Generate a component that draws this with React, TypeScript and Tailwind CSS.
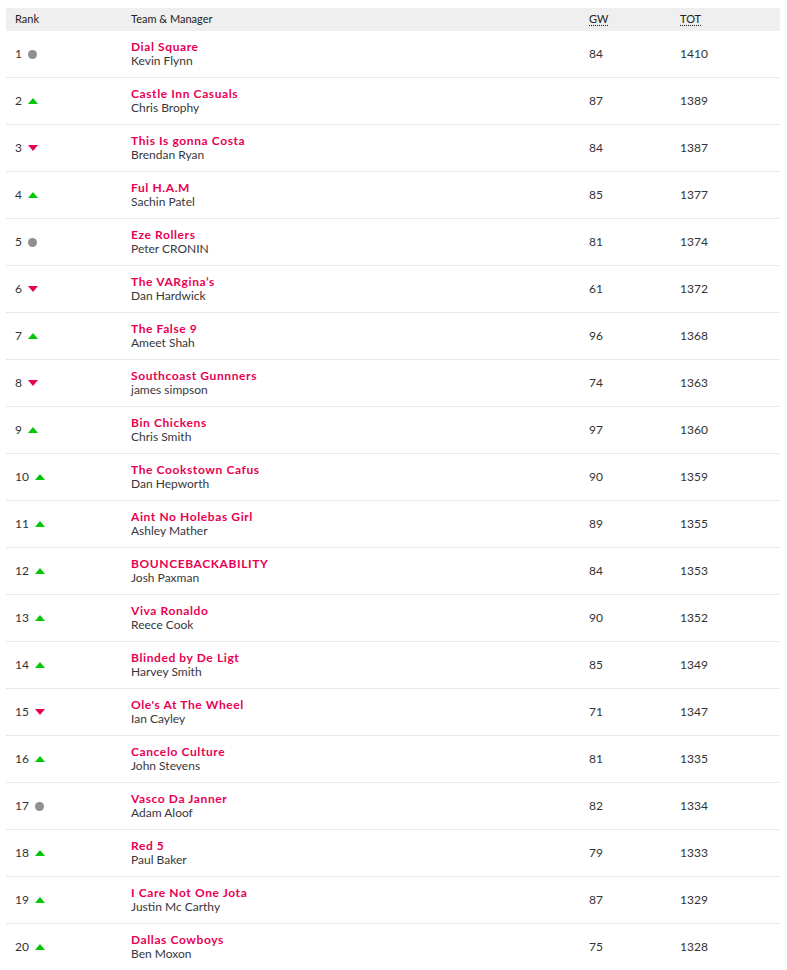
import React from 'react';

type Move = 'up' | 'down' | 'same';

const rows: { rank: number; move: Move; team: string; manager: string; gw: number; tot: number }[] = [
  { rank: 1, move: 'same', team: 'Dial Square', manager: 'Kevin Flynn', gw: 84, tot: 1410 },
  { rank: 2, move: 'up', team: 'Castle Inn Casuals', manager: 'Chris Brophy', gw: 87, tot: 1389 },
  { rank: 3, move: 'down', team: 'This Is gonna Costa', manager: 'Brendan Ryan', gw: 84, tot: 1387 },
  { rank: 4, move: 'up', team: 'Ful H.A.M', manager: 'Sachin Patel', gw: 85, tot: 1377 },
  { rank: 5, move: 'same', team: 'Eze Rollers', manager: 'Peter CRONIN', gw: 81, tot: 1374 },
  { rank: 6, move: 'down', team: 'The VARgina’s', manager: 'Dan Hardwick', gw: 61, tot: 1372 },
  { rank: 7, move: 'up', team: 'The False 9', manager: 'Ameet Shah', gw: 96, tot: 1368 },
  { rank: 8, move: 'down', team: 'Southcoast Gunnners', manager: 'james simpson', gw: 74, tot: 1363 },
  { rank: 9, move: 'up', team: 'Bin Chickens', manager: 'Chris Smith', gw: 97, tot: 1360 },
  { rank: 10, move: 'up', team: 'The Cookstown Cafus', manager: 'Dan Hepworth', gw: 90, tot: 1359 },
  { rank: 11, move: 'up', team: 'Aint No Holebas Girl', manager: 'Ashley Mather', gw: 89, tot: 1355 },
  { rank: 12, move: 'up', team: 'BOUNCEBACKABILITY', manager: 'Josh Paxman', gw: 84, tot: 1353 },
  { rank: 13, move: 'up', team: 'Viva Ronaldo', manager: 'Reece Cook', gw: 90, tot: 1352 },
  { rank: 14, move: 'up', team: 'Blinded by De Ligt', manager: 'Harvey Smith', gw: 85, tot: 1349 },
  { rank: 15, move: 'down', team: "Ole's At The Wheel", manager: 'Ian Cayley', gw: 71, tot: 1347 },
  { rank: 16, move: 'up', team: 'Cancelo Culture', manager: 'John Stevens', gw: 81, tot: 1335 },
  { rank: 17, move: 'same', team: 'Vasco Da Janner', manager: 'Adam Aloof', gw: 82, tot: 1334 },
  { rank: 18, move: 'up', team: 'Red 5', manager: 'Paul Baker', gw: 79, tot: 1333 },
  { rank: 19, move: 'up', team: 'I Care Not One Jota', manager: 'Justin Mc Carthy', gw: 87, tot: 1329 },
  { rank: 20, move: 'up', team: 'Dallas Cowboys', manager: 'Ben Moxon', gw: 75, tot: 1328 },
];

function MoveIcon({ move }: { move: Move }) {
  if (move === 'same') {
    return <span className="inline-block w-[9px] h-[9px] rounded-full bg-[#909090]" />;
  }
  if (move === 'up') {
    return (
      <svg width="10" height="6" viewBox="0 0 10 6" className="block">
        <polygon points="5,0 10,6 0,6" fill="#05c605" />
      </svg>
    );
  }
  return (
    <svg width="10" height="6" viewBox="0 0 10 6" className="block">
      <polygon points="0,0 10,0 5,6" fill="#e90052" />
    </svg>
  );
}

export default function App() {
  return (
    <div className="min-h-screen bg-white pt-2 px-[6px] font-['Lato',sans-serif] text-[#333]">
      <div className="w-[774px]">
        {/* header */}
        <div className="grid grid-cols-[125px_458px_91px_100px] h-[23px] items-center bg-[#efefef] text-[11px] text-[#222]">
          <div className="pl-[9px]">Rank</div>
          <div>Team &amp; Manager</div>
          <div>
            <abbr title="Gameweek" className="underline decoration-dotted underline-offset-2">GW</abbr>
          </div>
          <div>
            <abbr title="Total" className="underline decoration-dotted underline-offset-2">TOT</abbr>
          </div>
        </div>

        {rows.map((r) => (
          <div
            key={r.rank}
            className="grid grid-cols-[125px_458px_91px_100px] h-[47px] items-center border-b border-[#e8e8e8] text-[12px]"
          >
            <div className="pl-[9px] flex items-center gap-[6px] text-[#333]">
              <span>{r.rank}</span>
              <MoveIcon move={r.move} />
            </div>
            <div className="flex flex-col leading-[14px]">
              <span className="font-bold tracking-[0.6px] text-[#e90052]">{r.team}</span>
              <span className="text-[#37373d]">{r.manager}</span>
            </div>
            <div className="text-[#333]">{r.gw}</div>
            <div className="text-[#333]">{r.tot}</div>
          </div>
        ))}
      </div>
    </div>
  );
}
